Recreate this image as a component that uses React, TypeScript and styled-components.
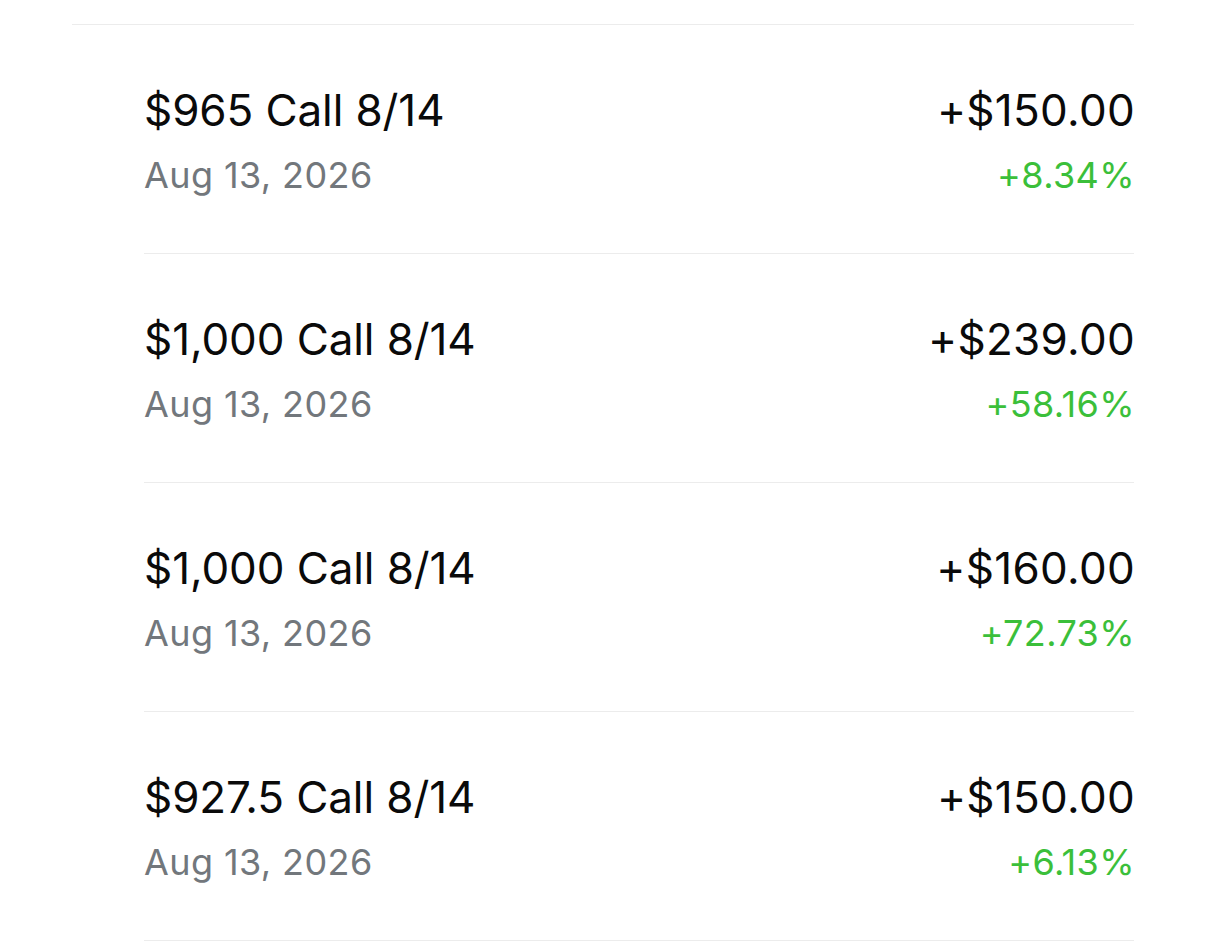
import React from "react";
import styled, { createGlobalStyle } from "styled-components";

const GlobalStyle = createGlobalStyle`
  html, body {
    margin: 0;
    padding: 0;
    background: #ffffff;
  }
  body {
    font-family: Inter, "Noto Sans", "Liberation Sans", sans-serif;
    -webkit-font-smoothing: antialiased;
  }
`;

const Page = styled.div`
  width: 1206px;
  height: 943px;
  overflow: hidden;
  background: #ffffff;
  padding-top: 24px;
  box-sizing: border-box;
`;

const List = styled.div`
  margin-left: 72px;
  width: 1062px;
  border-top: 1px solid #ececec;
`;

const Row = styled.div`
  margin-left: 72px;
  height: 229px;
  box-sizing: border-box;
  padding-top: 58px;
  border-bottom: 1px solid #ececec;
  display: flex;
  justify-content: space-between;
  align-items: flex-start;
`;

const Col = styled.div<{ $right?: boolean }>`
  display: flex;
  flex-direction: column;
  align-items: ${(p) => (p.$right ? "flex-end" : "flex-start")};
  gap: 16px;
  margin-right: ${(p) => (p.$right ? "-1px" : "0")};
`;

const Primary = styled.div<{ $amount?: boolean }>`
  font-size: 44px;
  line-height: 54px;
  color: #0a0a0a;
  font-weight: 400;
  letter-spacing: ${(p) => (p.$amount ? "0.3px" : "-0.1px")};
  white-space: nowrap;
`;

const Secondary = styled.div<{ $green?: boolean }>`
  font-size: 36px;
  line-height: 44px;
  color: ${(p) => (p.$green ? "#3bbf3a" : "#72777c")};
  font-weight: 400;
  letter-spacing: 0.4px;
  white-space: nowrap;
`;

const rows = [
  { title: "$965 Call 8/14", date: "Aug 13, 2026", amount: "+$150.00", pct: "+8.34%" },
  { title: "$1,000 Call 8/14", date: "Aug 13, 2026", amount: "+$239.00", pct: "+58.16%" },
  { title: "$1,000 Call 8/14", date: "Aug 13, 2026", amount: "+$160.00", pct: "+72.73%" },
  { title: "$927.5 Call 8/14", date: "Aug 13, 2026", amount: "+$150.00", pct: "+6.13%" },
];

export default function App() {
  return (
    <>
      <GlobalStyle />
      <Page>
        <List>
          {rows.map((r, i) => (
            <Row key={i}>
              <Col>
                <Primary>{r.title}</Primary>
                <Secondary>{r.date}</Secondary>
              </Col>
              <Col $right>
                <Primary $amount>{r.amount}</Primary>
                <Secondary $green>{r.pct}</Secondary>
              </Col>
            </Row>
          ))}
        </List>
      </Page>
    </>
  );
}
